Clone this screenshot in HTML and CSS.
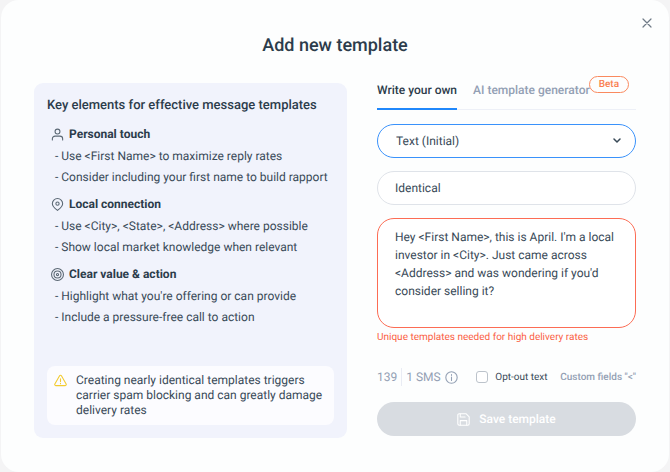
FILE: index.html
```html
<!DOCTYPE html>
<html lang="en">
<head>
  <meta charset="UTF-8">
  <title>Add new template</title>
  <meta name="viewport" content="width=device-width, initial-scale=1">
  <link rel="stylesheet" href="styles.css">
</head>
<body>
  <div class="modal" role="dialog" aria-labelledby="modalTitle">
    <button class="close-btn" type="button" aria-label="Close">
      <svg width="10" height="10" viewBox="0 0 10 10"><path d="M1 1l8 8M9 1L1 9"/></svg>
    </button>
    <h1 class="modal-title" id="modalTitle">Add new template</h1>
    <div class="modal-body">
      <section class="tips">
        <h2 class="tips-title">Key elements for effective message templates</h2>
        <div class="tip">
          <h3 class="tip-title">
            <svg class="icon" viewBox="0 0 24 24"><circle cx="12" cy="6.500" r="4.500"/><path d="M2.500 22v-2a5 5 0 0 1 5-5h9a5 5 0 0 1 5 5v2"/></svg>
            Personal touch
          </h3>
          <ul class="tip-list">
            <li>- Use &lt;First Name&gt; to maximize reply rates</li>
            <li>- Consider including your first name to build rapport</li>
          </ul>
        </div>
        <div class="tip">
          <h3 class="tip-title">
            <svg class="icon" viewBox="0 0 24 24"><path d="M12 23c-3-2.500-9.500-7-9.500-12.500a9.500 9.500 0 0 1 19 0C21.500 16 15 20.500 12 23z"/><circle cx="12" cy="10.500" r="3"/></svg>
            Local connection
          </h3>
          <ul class="tip-list">
            <li>- Use &lt;City&gt;, &lt;State&gt;, &lt;Address&gt; where possible</li>
            <li>- Show local market knowledge when relevant</li>
          </ul>
        </div>
        <div class="tip">
          <h3 class="tip-title">
            <svg class="icon" viewBox="0 0 24 24"><circle cx="12" cy="12" r="11"/><circle cx="12" cy="12" r="6.500"/><circle cx="12" cy="12" r="2"/></svg>
            Clear value &amp; action
          </h3>
          <ul class="tip-list">
            <li>- Highlight what you're offering or can provide</li>
            <li>- Include a pressure-free call to action</li>
          </ul>
        </div>
        <div class="warning">
          <svg class="icon icon-warning" viewBox="0 0 24 24"><path d="M10.300 3.300L1.600 18.500A2 2 0 0 0 3.300 21.500h17.400a2 2 0 0 0 1.700-3L13.700 3.300a2 2 0 0 0-3.400 0z"/><path d="M12 9v5M12 17v1"/></svg>
          <p>Creating nearly identical templates triggers carrier spam blocking and can greatly damage delivery rates</p>
        </div>
      </section>

      <form class="editor">
        <div class="tabs" role="tablist">
          <button class="tab active" type="button" role="tab" aria-selected="true">Write your own</button>
          <button class="tab" type="button" role="tab" aria-selected="false">AI template generator<span class="badge">Beta</span></button>
        </div>
        <div class="select-wrap">
          <select class="field select" aria-label="Template type">
            <option>Text (Initial)</option>
          </select>
          <svg class="chevron" width="8" height="6" viewBox="0 0 8 6"><path d="M1 1l3 3 3-3"/></svg>
        </div>
        <input class="field" type="text" aria-label="Template name" value="Identical">
        <textarea class="field message" aria-label="Message" aria-describedby="messageError">Hey &lt;First Name&gt;, this is April. I'm a local investor in &lt;City&gt;. Just came across &lt;Address&gt; and was wondering if you'd consider selling it?</textarea>
        <p class="error" id="messageError">Unique templates needed for high delivery rates</p>
        <div class="options">
          <div class="counter">
            <span class="chars">139</span>
            <span class="sms">1 SMS</span>
            <svg class="icon icon-info" viewBox="0 0 24 24"><circle cx="12" cy="12" r="10.500"/><path d="M12 11v6.500M12 6.500v1.500"/></svg>
          </div>
          <label class="opt-out"><input type="checkbox">Opt-out text</label>
          <button class="custom-fields" type="button">Custom fields "&lt;"</button>
        </div>
        <button class="save-btn" type="submit" disabled>
          <svg class="icon icon-save" viewBox="0 0 24 24"><path d="M4 1.500h13l5.500 5.500v13a2.500 2.500 0 0 1-2.500 2.500H4A2.500 2.500 0 0 1 1.500 20V4A2.500 2.500 0 0 1 4 1.500z"/><path d="M6 22v-8h12v8M6 2v5.500h9"/></svg>
          Save template
        </button>
      </form>
    </div>
  </div>
</body>
</html>
```

FILE: styles.css
```css
* {
  box-sizing: border-box;
}
body {
  margin: 0;
  background: #f4f4f5;
  font-family: Roboto, "Liberation Sans", sans-serif;
  font-size: 12px;
  color: #394a58;
  text-rendering: geometricPrecision;
}
h1, h2, h3, p, ul {
  margin: 0;
  padding: 0;
}
button, input, select, textarea {
  font-family: inherit;
  color: inherit;
  text-rendering: inherit;
  margin: 0;
}
button {
  background: none;
  border: none;
  padding: 0;
  cursor: pointer;
}
svg {
  fill: none;
  stroke: currentColor;
  stroke-linecap: round;
  stroke-linejoin: round;
}
.modal {
  position: relative;
  min-height: 100vh;
  margin: 0 1px;
  padding: 34px 33px;
  background: #fdfefe;
  border-radius: 18px;
}
.close-btn {
  position: absolute;
  top: 15px;
  right: 14px;
  width: 16px;
  height: 16px;
  display: flex;
  align-items: center;
  justify-content: center;
  color: #6f7b87;
}
.close-btn svg {
  stroke-width: 1.2;
}
.modal-title {
  font-size: 18px;
  line-height: 24px;
  font-weight: 500;
  text-align: center;
  color: #2c3c4b;
}
.modal-body {
  display: grid;
  grid-template-columns: 313fr 259fr;
  gap: 30px;
  margin-top: 25px;
}
.icon {
  flex: none;
  width: 13px;
  height: 13px;
  stroke-width: 2;
}

/* left panel */
.tips {
  display: flex;
  flex-direction: column;
  padding: 13px;
  background: #f1f3fc;
  border-radius: 9px;
}
.tips-title {
  font-size: 13px;
  line-height: 20px;
  font-weight: 500;
  color: #2c3c4b;
  margin-bottom: 8px;
}
.tip {
  margin-bottom: 6px;
}
.tip-title {
  display: flex;
  align-items: center;
  gap: 5px;
  padding-left: 4px;
  margin-bottom: 2px;
  font-size: 12px;
  line-height: 20px;
  font-weight: 700;
  color: #2c3c4b;
}
.tip-title .icon {
  color: #5b6874;
}
.tip-list {
  list-style: none;
  padding-left: 8px;
  line-height: 21px;
}
.warning {
  display: flex;
  gap: 9px;
  margin-top: auto;
  padding: 7px;
  background: #fcfcff;
  border-radius: 8px;
  line-height: 15px;
}
.icon-warning {
  margin-top: 1px;
  color: #f2cb30;
}

/* right panel */
.editor {
  display: flex;
  flex-direction: column;
  min-width: 0;
  padding-bottom: 2px;
}
.tabs {
  display: flex;
  gap: 16px;
  height: 27px;
  margin-bottom: 14px;
  border-bottom: 1px solid #edf0f7;
}
.tab {
  position: relative;
  height: 27px;
  padding-bottom: 10px;
  border-bottom: 2px solid transparent;
  font-size: 12px;
  line-height: 15px;
  font-weight: 500;
  color: #93a0b4;
  white-space: nowrap;
}
.tab.active {
  color: #2c3c4b;
  border-color: #1f87fb;
}
.badge {
  position: absolute;
  left: 100%;
  top: -7px;
  margin-left: -1px;
  padding: 0 9px;
  border: 1px solid #fa8a5f;
  border-radius: 9px;
  background: #fdfefe;
  font-size: 10px;
  line-height: 15px;
  color: #fa7f50;
}
.field {
  width: 100%;
  height: 34px;
  padding: 0 17px;
  border: 1px solid #dfe3e9;
  border-radius: 17px;
  background: #fff;
  font-size: 12px;
  outline: none;
}
.select-wrap {
  position: relative;
  margin-bottom: 13px;
}
.select {
  display: block;
  appearance: none;
  padding: 0 18px;
  border-color: #3a92fb;
}
.chevron {
  position: absolute;
  right: 15px;
  top: 14px;
  stroke-width: 1.5;
  pointer-events: none;
}
.message {
  display: block;
  height: 110px;
  margin-top: 13px;
  padding: 9px 17px;
  border-color: #fc6c54;
  line-height: 18px;
  resize: none;
}
.error {
  margin-top: 3px;
  font-size: 10px;
  line-height: 14px;
  color: #fb5f45;
}
.options {
  display: flex;
  align-items: center;
  justify-content: space-between;
  height: 18px;
  margin: 23px 0 16px;
  font-size: 10px;
  white-space: nowrap;
}
.counter {
  display: flex;
  align-items: center;
  font-size: 12px;
  line-height: 18px;
  color: #93a0b4;
}
.chars {
  padding-right: 4px;
  margin-right: 4px;
  border-right: 1px solid #e9ecf4;
}
.icon-info {
  margin-left: 4px;
}
.opt-out {
  display: flex;
  align-items: center;
  gap: 7px;
  margin-left: 6px;
}
.opt-out input {
  appearance: none;
  width: 12px;
  height: 12px;
  border: 1px solid #bcc3cb;
  border-radius: 3px;
  background: #fff;
}
.opt-out input:checked {
  background: #1f87fb;
}
.custom-fields {
  font-size: 10px;
  font-weight: 500;
  color: #93a0b4;
}
.save-btn {
  display: flex;
  align-items: center;
  justify-content: center;
  gap: 9px;
  height: 34px;
  border-radius: 17px;
  background: #d8dce1;
  color: #fff;
  font-size: 12px;
  font-weight: 500;
  cursor: default;
}
```
